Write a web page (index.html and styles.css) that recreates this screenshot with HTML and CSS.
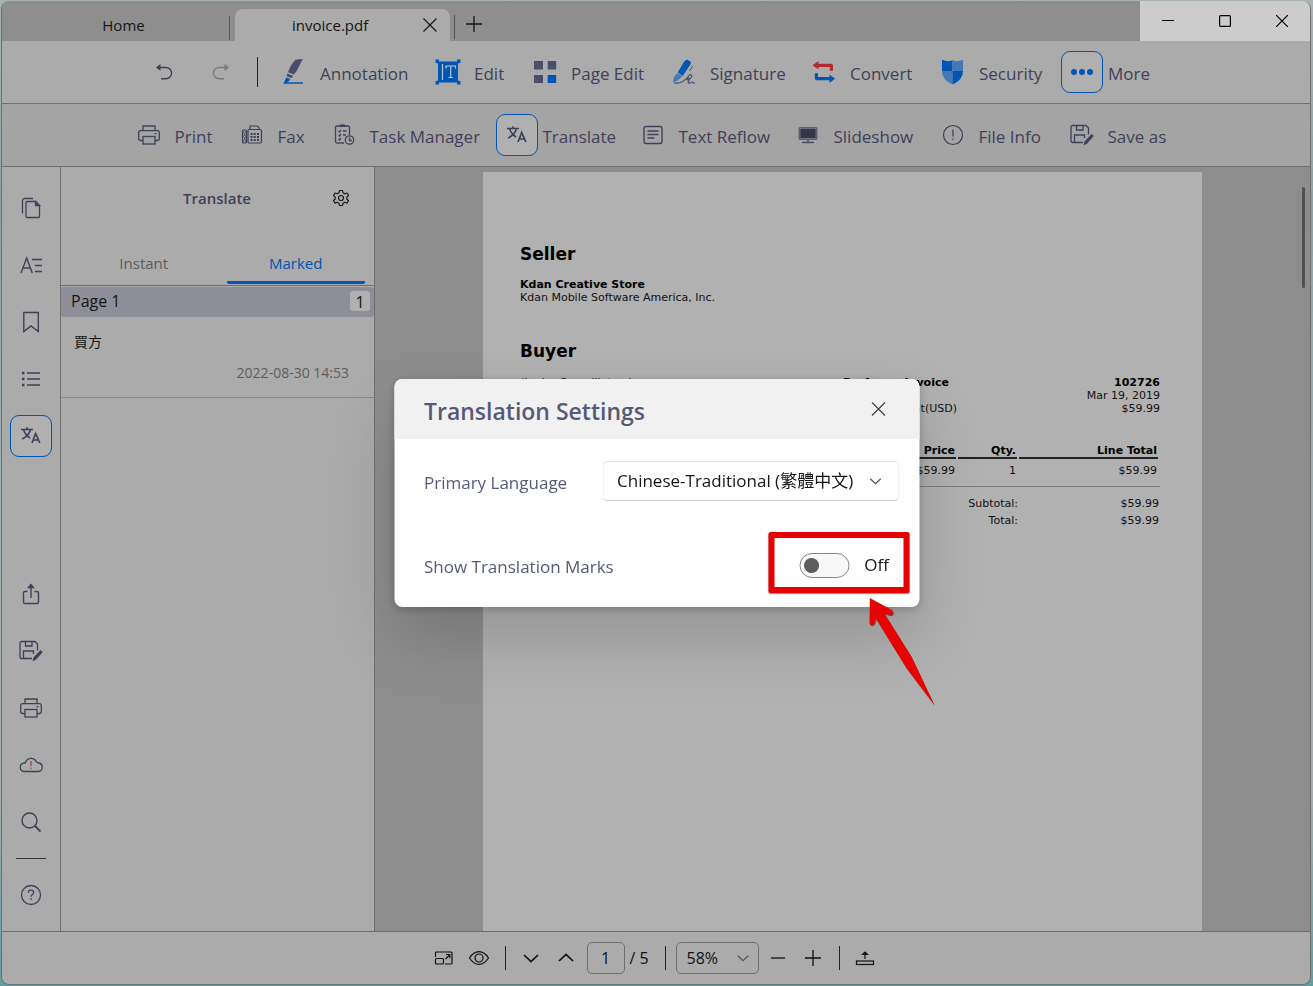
FILE: index.html
```html
<!DOCTYPE html>
<html lang="en">
<head>
<meta charset="utf-8">
<title>invoice.pdf</title>
<link rel="stylesheet" href="styles.css">
</head>
<body>
<svg class="sprite" aria-hidden="true">
  <symbol id="i-translate" viewBox="0 0 24 24"><path d="M2 5.500h12M8 3.200v2.300M11.500 5.500c-1 4-4 7.500-8.500 9.500M4.500 5.500c1 3.500 3.500 6.500 6.500 8.500" fill="none" stroke="currentColor" stroke-width="1.600"/><path d="M13 19l3.700-9.500L20.800 19M14.500 16h5" fill="none" stroke="currentColor" stroke-width="1.700"/></symbol>
  <symbol id="i-print" viewBox="0 0 24 24"><g fill="none" stroke="currentColor" stroke-width="1.300"><path d="M6 7.500V3h12v4.500M6 17.500H3.500a1.800 1.800 0 0 1-1.800-1.800V9.500c0-1.100.8-1.900 1.800-1.900h17c1 0 1.800.8 1.800 1.900v6.200c0 1-.8 1.800-1.800 1.800H18"/><rect x="6" y="13.500" width="12" height="7.500"/><path d="M17.500 10.700h1.800"/></g></symbol>
  <symbol id="i-save" viewBox="0 0 24 24"><g fill="none" stroke="currentColor" stroke-width="1.300"><path d="M13 19.500H2.500a1.500 1.500 0 0 1-1.500-1.500V4a1.500 1.500 0 0 1 1.500-1.500H16L18.500 5v6.500M6.500 2.500V7H13V2.500M4.500 19.500v-7.500h10v3"/></g><path d="M13.500 22.200l1-3.600 7-7.600 2.400 2-7 7.700z" fill="currentColor"/></symbol>
  <symbol id="i-close" viewBox="0 0 16 16"><path d="M1.500 1.500l13 13M14.500 1.500l-13 13" fill="none" stroke="currentColor" stroke-width="1.200"/></symbol>
  <symbol id="i-down" viewBox="0 0 16 16"><path d="M1 5l7 6.500L15 5" fill="none" stroke="currentColor" stroke-width="1.700"/></symbol>
  <symbol id="i-plus" viewBox="0 0 16 16"><path d="M0 8h16M8 0v16" fill="none" stroke="currentColor" stroke-width="1.300"/></symbol>
</svg>

<div class="app">
  <header class="titlebar">
    <nav class="tabs">
      <button class="tab tab-home" type="button">Home</button>
      <div class="tab tab-active"><span class="tab-name">invoice.pdf</span>
        <button class="icon-btn" type="button" aria-label="Close tab"><svg width="16" height="16"><use href="#i-close"/></svg></button></div>
      <button class="tab-add" type="button" aria-label="New tab"><svg width="16" height="16"><use href="#i-plus"/></svg></button>
    </nav>
    <div class="window-controls">
      <button type="button" aria-label="Minimize"><svg width="12" height="12"><path d="M0 5.500h12" stroke="#000"/></svg></button>
      <button type="button" aria-label="Maximize"><svg width="12" height="12"><rect x=".6" y=".6" width="10.800" height="10.800" rx="1" fill="none" stroke="#000" stroke-width="1.200"/></svg></button>
      <button type="button" aria-label="Close"><svg width="12" height="12" viewBox="0 0 16 16"><path d="M0 0l16 16M16 0L0 16" stroke="#000" stroke-width="1.600"/></svg></button>
    </div>
  </header>

  <div class="toolbar toolbar-main">
    <button class="tool" type="button" aria-label="Undo"><span class="cell"><svg width="18" height="18" viewBox="0 0 18 18"><path d="M2 4.500h9a5.300 5.300 0 0 1 0 11.200H6" fill="none" stroke="#3f4158" stroke-width="1.400"/><path d="M1 4.500L5.500 1v7z" fill="#3f4158"/></svg></span></button>
    <button class="tool faded" type="button" aria-label="Redo"><span class="cell"><svg width="18" height="18" viewBox="0 0 18 18"><path d="M16 4.500H7a5.300 5.300 0 0 0 0 11.200h5" fill="none" stroke="#3f4158" stroke-width="1.400"/><path d="M17 4.500L12.500 1v7z" fill="#3f4158"/></svg></span></button>
    <span class="rule"></span>
    <button class="tool" type="button"><span class="cell"><svg width="26" height="26" viewBox="0 0 26 26"><path d="M14.500.8Q17 0 21.700 0l-6 12-2.700 3.400-6-2.200Q10 5 14.500.8z" fill="#4b4e68"/><path d="M6.200 14.600l5.800 2.200-1.500 2.500-4.800-2z" fill="#4b4e68"/><path d="M5.300 18.400l4 1.700-1.500 2L6 23.300h16v1.500H2.300z" fill="#0056b4"/></svg></span>Annotation</button>
    <button class="tool" type="button"><span class="cell"><svg width="26" height="26" viewBox="0 0 26 26"><path d="M2.500 2.500h21v21h-21z" fill="#0056b4"/><path d="M.5.500h3.500V4H.5zM22 .5h3.500V4H22zM.5 22h3.500v3.500H.5zM22 22h3.500v3.500H22z" fill="#0056b4"/><path d="M2.500 5v16M23.500 5v16" stroke="#ababab"/><path d="M7.500 5v16M11 9.500V7h9.500v2.500M15.700 7v11.500M13.500 18.500h4.500" fill="none" stroke="#b8c4d2" stroke-width="1.200"/></svg></span>Edit</button>
    <button class="tool" type="button"><span class="cell"><svg width="24" height="24" viewBox="0 0 24 24"><path d="M1 1h9v8.500H1zM14.700 1h8.500v8.500h-8.500zM1 15h9v8H1z" fill="#4b4e68"/><path d="M14.700 15h8.500v8h-8.500z" fill="#0056b4"/></svg></span>Page Edit</button>
    <button class="tool" type="button"><span class="cell"><svg width="26" height="26" viewBox="0 0 26 26"><path d="M13.500 2L16 .5l4 2.600-.8 2.600-7.500 11.200-5-3.500z" fill="#0056b4"/><path d="M6.300 14l5 3.500-5.500 4.600-3.800 1.400.8-5z" fill="#4378b5"/><path d="M20.500 6.500l1 1-3 4.500" fill="none" stroke="#4b4e68"/><path d="M3 24c7 1 12-3 15.500-8 1.500-1 3 .500 2 2-1.500 2-4 3.500-4.500 2.500s1.500-2 2.500-1c1 .7-2.500 4-1 4.600 1.500.5 3-1.500 4-1 .7.400 0 1.500 2.500.7" fill="none" stroke="#4b4e68" stroke-width="1.200"/></svg></span>Signature</button>
    <button class="tool" type="button"><span class="cell"><svg width="24" height="24" viewBox="0 0 24 24"><path d="M.5 5.300L6.500 1v2.700H19a2 2 0 0 1 2 2v5h-3.200V7H6.500v2.600z" fill="#b32b2d"/><path d="M23 18.700L17.500 23v-2.700H4.800a2 2 0 0 1-2-2v-5H6V17h11.500v-2.500z" fill="#0056b4"/></svg></span>Convert</button>
    <button class="tool" type="button"><span class="cell"><svg width="24" height="26" viewBox="0 0 24 26"><path d="M11.500 1Q9.500 2.500 7 2.300T1 .8V12h10.500z" fill="#0056b4"/><path d="M11.500 1Q13.500 2.500 16 2.300T22 .8V12H11.500zM1 12q0 9 10.500 13.500V12z" fill="#4378b5"/><path d="M22 12q0 9-10.500 13.500V12z" fill="#0056b4"/></svg></span>Security</button>
    <button class="tool" type="button"><span class="cell framed"><svg width="24" height="8" viewBox="0 0 24 8" fill="#0056b4"><circle cx="4" cy="4" r="3"/><circle cx="12" cy="4" r="3"/><circle cx="20" cy="4" r="3"/></svg></span>More</button>
  </div>

  <div class="toolbar toolbar-more">
    <button class="tool" type="button"><span class="cell"><svg width="24" height="24"><use href="#i-print"/></svg></span>Print</button>
    <button class="tool" type="button"><span class="cell"><svg width="22" height="22" viewBox="0 0 22 22"><g fill="none" stroke="currentColor" stroke-width="1.200"><rect x="1.500" y="6" width="4" height="13" rx="1"/><path d="M2 7l2.500 5.500L2 18M5 7l-2.500 5.500L5 18" stroke-width=".7"/><path d="M9 5.500V2h7l2 1.500v2"/><rect x="7" y="5.500" width="13.500" height="13.500" rx="1.200"/></g><path d="M10.500 9v8M13.700 9v8M17 9v8" stroke="currentColor" stroke-width="2" stroke-dasharray="2 1"/></svg></span>Fax</button>
    <button class="tool" type="button"><span class="cell"><svg width="24" height="24" viewBox="0 0 24 24"><g fill="none" stroke="currentColor" stroke-width="1.300"><path d="M12 20H5a1.500 1.500 0 0 1-1.500-1.500v-14A1.500 1.500 0 0 1 5 3h11a1.500 1.500 0 0 1 1.500 1.500V12M6.500 8l1 1 1.500-2M11 8h3.500M6.500 12l1 1 1.500-2M11 12h3M6.500 16l1 1 1.500-2"/><circle cx="17.500" cy="17" r="4.200"/><path d="M17.500 14.500v3h2.500"/></g><path d="M7.500 1.800h2l1-1.100 1 1.100h2V4h-6z" fill="currentColor"/></svg></span>Task Manager</button>
    <button class="tool" type="button"><span class="cell framed"><svg width="24" height="24"><use href="#i-translate"/></svg></span>Translate</button>
    <button class="tool" type="button"><span class="cell"><svg width="20" height="20" viewBox="0 0 20 20" fill="none" stroke="currentColor" stroke-width="1.400"><rect x="1" y="1.500" width="18" height="17" rx="2"/><path d="M4.500 6h11M4.500 9.500h11M4.500 13h7"/></svg></span>Text Reflow</button>
    <button class="tool" type="button"><span class="cell"><svg width="20" height="18" viewBox="0 0 20 18"><rect x="1" y="1.500" width="18" height="12" rx="1" fill="#34374c" stroke="#5a5d72"/><rect x="2" y="2.500" width="16" height="10" fill="none" stroke="#8f909c" stroke-width=".7"/><path d="M10 14v2.500M4 16.500h12" stroke="#4b4e68" stroke-width="1.500"/></svg></span>Slideshow</button>
    <button class="tool" type="button"><span class="cell"><svg width="22" height="22" viewBox="0 0 22 22"><circle cx="11" cy="11" r="9.500" fill="none" stroke="currentColor" stroke-width="1.200"/><path d="M11 5.500v7M11 14.500V16" stroke="currentColor" stroke-width="1.300"/></svg></span>File Info</button>
    <button class="tool" type="button"><span class="cell"><svg width="24" height="24"><use href="#i-save"/></svg></span>Save as</button>
  </div>

  <main class="main">
    <nav class="rail">
      <button class="cell" type="button" aria-label="Pages"><svg width="22" height="22" viewBox="0 0 22 22" fill="none" stroke="currentColor" stroke-width="1.300"><path d="M2.500 16.500V3.500a2 2 0 0 1 2-2H13"/><path d="M6 5.500a1 1 0 0 1 1-1h8.500L19.500 8.500v11a1 1 0 0 1-1 1H7a1 1 0 0 1-1-1z"/><path d="M15.500 4.500l4 4h-4z" fill="currentColor"/></svg></button>
      <button class="cell" type="button" aria-label="Text"><svg width="24" height="20" viewBox="0 0 24 20" fill="none" stroke="currentColor" stroke-width="1.400"><path d="M2 18L7.700 3l5.600 15M4 13h7.500M13 4.500h10M16 10.500h7M16 16.500h7"/></svg></button>
      <button class="cell" type="button" aria-label="Bookmarks"><svg width="20" height="22" viewBox="0 0 20 22" fill="none" stroke="currentColor" stroke-width="1.400"><path d="M2.800 1.500h14.500v19L10 15l-7.200 5.500z"/></svg></button>
      <button class="cell" type="button" aria-label="Outline"><svg width="20" height="16" viewBox="0 0 20 16" fill="none" stroke="currentColor" stroke-width="1.400"><path d="M6 2h13M6 8h13M6 14h13"/><path d="M1 2h2.500M1 8h2.500M1 14h2.500" stroke-width="2.300"/></svg></button>
      <button class="cell framed" type="button" aria-label="Translate"><svg width="24" height="24"><use href="#i-translate"/></svg></button>
      <span class="rail-space"></span>
      <button class="cell" type="button" aria-label="Share"><svg width="20" height="22" viewBox="0 0 20 22" fill="none" stroke="currentColor" stroke-width="1.400"><path d="M6.500 8.500H4a1.500 1.500 0 0 0-1.500 1.500v9a1.500 1.500 0 0 0 1.500 1.500h12a1.500 1.500 0 0 0 1.500-1.500v-9A1.500 1.500 0 0 0 16 8.500h-2.500M10 15V3"/><path d="M7.500 4.500L10 1.500l2.500 3z" fill="currentColor"/></svg></button>
      <button class="cell" type="button" aria-label="Save as"><svg width="24" height="24"><use href="#i-save"/></svg></button>
      <button class="cell" type="button" aria-label="Print"><svg width="24" height="24"><use href="#i-print"/></svg></button>
      <button class="cell" type="button" aria-label="Cloud"><svg width="26" height="18" viewBox="0 0 26 18"><path d="M6 15.500a4.200 4.200 0 0 1-.3-8.300q1.300 0 1.800-.7a5.800 5.800 0 0 1 10.800-.8q.8 1.100 2.500 1.300a4.300 4.300 0 0 1-.5 8.500z" fill="none" stroke="currentColor" stroke-width="1.300"/><path d="M13 5v5M13 11.500V13" stroke="#a8423f" stroke-width="1.300"/></svg></button>
      <button class="cell" type="button" aria-label="Search"><svg width="22" height="22" viewBox="0 0 22 22" fill="none" stroke="currentColor" stroke-width="1.400"><circle cx="9.500" cy="9.500" r="7.500"/><path d="M15 15l5.500 5.500" stroke-width="1.800"/></svg></button>
      <span class="rail-line"></span>
      <button class="cell" type="button" aria-label="Help"><svg width="22" height="22" viewBox="0 0 22 22" fill="none" stroke="currentColor" stroke-width="1.300"><circle cx="11" cy="11" r="9.500"/><path d="M8.300 8.700c0-3.600 5.400-3.400 5.400-.2 0 2-2.700 2-2.700 4.300M11 14.300v1.700"/></svg></button>
    </nav>

    <aside class="panel">
      <div class="panel-head">
        <h2>Translate</h2>
        <button class="icon-btn gear" type="button" aria-label="Settings"><svg width="18" height="18" viewBox="0 0 18 18" fill="none" stroke="#1c1c1c" stroke-width="1.200"><path d="M7.500 1.500h3l.5 2.300 1.700 1 2.300-.8 1.500 2.600L14.800 8v2l1.700 1.500-1.500 2.600-2.300-.8-1.700 1-.5 2.200h-3L7 14.300l-1.700-1-2.300.8-1.500-2.600L3.200 10V8L1.500 6.600 3 4l2.300.8 1.700-1z" stroke-linejoin="round"/><circle cx="9" cy="9" r="2.500"/></svg></button>
      </div>
      <div class="panel-tabs">
        <button type="button">Instant</button>
        <button class="on" type="button">Marked</button>
      </div>
      <div class="group"><span>Page 1</span><span class="count">1</span></div>
      <article class="mark"><p>買方</p><time>2022-08-30 14:53</time></article>
    </aside>

    <section class="viewer">
      <div class="page">
        <h3>Seller</h3>
        <p><b>Kdan Creative Store</b></p>
        <p>Kdan Mobile Software America, Inc.</p>
        <h3 class="buyer">Buyer</h3>
        <div class="parties">
          <p>(Junior Compiliators)</p>
          <dl>
            <dt><b>Proforma Invoice</b></dt><dd><b>102726</b></dd>
            <dt></dt><dd>Mar 19, 2019</dd>
            <dt class="due">Amount(USD)</dt><dd>$59.99</dd>
          </dl>
        </div>
        <table>
          <colgroup><col><col class="c-price"><col class="c-qty"><col class="c-total"></colgroup>
          <thead><tr><th></th><th>Price</th><th>Qty.</th><th>Line Total</th></tr></thead>
          <tbody><tr><td></td><td>$59.99</td><td>1</td><td>$59.99</td></tr></tbody>
        </table>
        <dl class="sums"><dt>Subtotal:</dt><dd>$59.99</dd><dt>Total:</dt><dd>$59.99</dd></dl>
      </div>
      <span class="thumb"></span>
    </section>
  </main>

  <footer class="status">
    <button type="button" aria-label="Fit"><svg width="20" height="16" viewBox="0 0 20 16" fill="none" stroke="currentColor" stroke-width="1.200"><path d="M1.500 7V3a1 1 0 0 1 1-1H17a1 1 0 0 1 1 1v10a1 1 0 0 1-1 1h-6"/><rect x="1.500" y="8.500" width="8" height="5.500" rx="1"/><path d="M11.500 9L15.500 5M12 4.500h3.800v3.800"/></svg></button>
    <button type="button" aria-label="View"><svg width="22" height="16" viewBox="0 0 22 16" fill="none" stroke="currentColor" stroke-width="1.200"><path d="M1.500 8Q5.500 1.700 11 1.700T20.500 8Q16.500 14.300 11 14.300T1.500 8z"/><circle cx="11" cy="8" r="4"/></svg></button>
    <span class="rule"></span>
    <button type="button" aria-label="Next page"><svg width="16" height="16"><use href="#i-down"/></svg></button>
    <button type="button" aria-label="Previous page"><svg class="flip" width="16" height="16"><use href="#i-down"/></svg></button>
    <input class="page-no" type="text" value="1" aria-label="Page number">
    <span class="pages">/ 5</span>
    <span class="rule"></span>
    <span class="pick zoom"><select aria-label="Zoom"><option>58%</option></select><svg width="12" height="12"><use href="#i-down"/></svg></span>
    <button type="button" aria-label="Zoom out"><svg width="16" height="16"><path d="M1 8h14" stroke="currentColor" stroke-width="1.300"/></svg></button>
    <button type="button" aria-label="Zoom in"><svg width="16" height="16"><use href="#i-plus"/></svg></button>
    <span class="rule"></span>
    <button type="button" aria-label="Upload"><svg width="20" height="16" viewBox="0 0 20 16" fill="none" stroke="currentColor" stroke-width="1.200"><rect x="1.500" y="11" width="17" height="3.500"/><path d="M10 9V3"/><path d="M7.500 4.500L10 2l2.500 2.500z" fill="currentColor"/></svg></button>
  </footer>
</div>

<div class="dialog" role="dialog" aria-labelledby="dlg-title">
  <div class="dialog-head">
    <h1 id="dlg-title">Translation Settings</h1>
    <button class="icon-btn" type="button" aria-label="Close"><svg width="16" height="16"><use href="#i-close"/></svg></button>
  </div>
  <div class="dialog-body">
    <div class="field">
      <label for="lang">Primary Language</label>
      <span class="pick lang"><select id="lang"><option>Chinese-Traditional (繁體中文)</option></select><svg width="12" height="12"><use href="#i-down"/></svg></span>
    </div>
    <div class="field">
      <label for="marks">Show Translation Marks</label>
      <span class="switch"><input id="marks" type="checkbox" role="switch">Off</span>
    </div>
  </div>
  <span class="highlight"></span>
  <svg class="arrow" width="70" height="112" viewBox="0 0 70 112"><path id="shaft" d="M1.300 1L23.500 13q3 3.500-1 5l-6.500-1.500 27 43L66 108 38 71 7.500 21.500l-1.500 5q-3 3-5 0z" transform="translate(.5 1.300)" fill="#300" opacity=".5"/><path d="M1.300 1L23.500 13q3 3.500-1 5l-6.500-1.500 27 43L66 108 38 71 7.500 21.500l-1.500 5q-3 3-5 0z" fill="#e80303"/></svg>
</div>
</body>
</html>
```
FILE: styles.css
```css
* { box-sizing: border-box; margin: 0; padding: 0; }

:root {
  --ink: #3f4158;
  --line: #6f6f6f;
  --base: #ababab;
  --blue: #0056b4;
}

body {
  height: 100vh;
  padding: 1px 2px 1px 1px;
  overflow: hidden;
  font: 17px/24px "Open Sans", "Noto Sans CJK TC", sans-serif;
  color: var(--ink);
  background: linear-gradient(#a9b4b6, #88a4a6 20%, #9fb0b5 50%, #a5aeb0 80%, #5f9ea0);
}

button, input, select { font: inherit; color: inherit; background: none; border: 0; }
svg { display: block; flex: none; }
.sprite { position: absolute; width: 0; height: 0; }

.app {
  display: flex;
  flex-direction: column;
  height: 100%;
  border-right: 1px solid var(--line);
  border-bottom: 1px solid var(--line);
  border-left: 1px solid var(--line);
  border-radius: 8px;
  overflow: hidden;
  background: var(--base);
}

/* Title bar */
.titlebar { display: flex; justify-content: space-between; height: 40px; background: #8e8e8e; }
.tabs { display: flex; align-items: flex-end; font-size: 15px; color: #151515; }
.tab { height: 32px; display: flex; align-items: center; justify-content: center; }
.tab-home { width: 228px; height: 24px; border-right: 1px solid #555; padding: 0 0 6px 16px; align-self: center; margin-top: 14px; }
.tab-active { width: 215px; margin-left: 5px; padding: 0 12px 0 57px; justify-content: space-between; border-radius: 8px 8px 0 0; background: var(--base); }
.tab-add { height: 24px; margin: 0 0 2px 4px; padding: 0 12px 6px 11px; border-left: 1px solid #555; }
.icon-btn { display: flex; }
.window-controls { display: flex; background: #ccc; }
.window-controls button { width: 57px; display: flex; align-items: center; justify-content: center; }
.window-controls button:first-child { width: 56px; }

/* Toolbars */
.toolbar { display: grid; align-items: center; justify-content: center; height: 63px; padding-right: 20px; border-bottom: 1px solid var(--line); }
.toolbar-main { grid-template-columns: 57px 57px 16px 154px 97px 139px 140px 129px 129px 88px; }
.toolbar-more { grid-template-columns: 103px 92px 173px 136px 155px 145px 129px 104px; background: #a4a4a4; }
.tool { display: flex; align-items: flex-end; gap: 5px; line-height: 39px; white-space: nowrap; }
.faded { opacity: .45; }
.cell { width: 42px; height: 42px; flex: none; display: flex; align-items: center; justify-content: center; }
.framed { border: 1px solid var(--blue); border-radius: 9px; background: #b0b0b0; }
.rule { width: 1px; height: 24px; background: #222; }
.toolbar .rule { height: 30px; }

/* Body */
.main { flex: 1; min-height: 0; display: flex; border-bottom: 1px solid var(--line); }
.rail { width: 59px; padding: 20px 8px 15px; display: flex; flex-direction: column; align-items: center; gap: 15px; border-right: 1px solid var(--line); }
.rail-space { flex: 1; margin-top: -15px; }
.rail-line { width: 30px; height: 1px; background: #333; }

.panel { width: 314px; border-right: 1px solid var(--line); font-size: 15px; }
.panel-head { display: flex; align-items: center; justify-content: flex-end; height: 62px; padding-right: 24px; }
.panel-head h2 { flex: 1; padding-left: 41px; text-align: center; font-size: 15px; font-weight: 600; }
.panel-tabs { display: grid; grid-template-columns: 1fr 1fr; height: 57px; padding: 12px 9px 1px; border-bottom: 1px solid var(--line); }
.panel-tabs button { padding-top: 4px; border-bottom: 3px solid transparent; color: #5d5d5d; }
.panel-tabs .on { margin-left: 9px; border-color: var(--blue); border-radius: 2px; color: var(--blue); }
.group { display: flex; align-items: center; justify-content: space-between; height: 30px; margin-top: 1px; padding: 0 4px 2px 10px; border-radius: 3px; background: #8e8e98; color: #151515; font-size: 16px; }
.count { width: 20px; height: 20px; border-radius: 3px; background: #b0b0b0; text-align: center; line-height: 22px; }
.mark { height: 81px; padding: 13px 25px 0 13px; border-bottom: 1px solid #8a8a8a; font-size: 14px; }
.mark p { color: #151515; }
.mark time { display: block; margin-top: 7px; text-align: right; color: #5d5d5d; }

/* Document */
.viewer { position: relative; flex: 1; display: flex; justify-content: center; padding-top: 5px; background: #8d8d8d; overflow: hidden; }
.page { width: 719px; height: 1017px; flex: none; padding: 71px 42px 0 37px; background: #b1b1b1; color: #111; font: 11px/13px "DejaVu Sans", sans-serif; }
.page h3 { margin-bottom: 13px; font-size: 17px; line-height: 22px; color: #000; }
.page h3.buyer { margin-top: 36px; }
.page b { color: #000; }
.parties { display: grid; grid-template-columns: 323px 1fr; margin-top: 14px; }
.parties dl { display: grid; grid-template-columns: 114px 1fr; }
.parties .due { text-align: right; }
dd { text-align: right; }
table { width: 100%; margin-top: 26px; table-layout: fixed; border-spacing: 2px 0; border-bottom: 1px solid #7d7d7d; }
.c-price { width: 100px; }
.c-qty { width: 59px; }
.c-total { width: 139px; }
th { padding: 3px 1px 0; border-bottom: 2px solid #222; text-align: right; color: #000; }
td { height: 27px; padding: 0 1px 4px; text-align: right; }
.sums { display: grid; grid-template-columns: 498px 1fr; row-gap: 4px; margin-top: 10px; padding-right: 1px; }
.sums dt { text-align: right; }
.thumb { position: absolute; top: 20px; right: 5px; width: 3px; height: 101px; border-radius: 2px; background: #505050; }

/* Status bar */
.status { display: flex; align-items: center; justify-content: center; height: 52px; padding-right: 3px; color: #111; font-size: 16px; }
.status button { width: 35px; height: 32px; display: flex; align-items: center; justify-content: center; }
.status .rule { margin: 0 8px; }
.flip { transform: scaleY(-1); }
.page-no { width: 38px; height: 32px; margin: 0 5px 0 3px; border: 1px solid var(--line); border-radius: 5px; text-align: center; }
.pages { width: 27px; }
.pick { position: relative; display: block; }
.pick select { width: 100%; height: 100%; appearance: none; border-radius: 5px; }
.pick svg { position: absolute; top: 50%; margin-top: -6px; pointer-events: none; }
.zoom { width: 83px; height: 32px; margin: 0 2px; }
.zoom select { padding-left: 10px; border: 1px solid var(--line); }
.zoom svg { right: 10px; color: #555; }

/* Dialog */
.dialog {
  position: fixed;
  top: 50%;
  left: 50%;
  width: 525px;
  transform: translate(-50%, -50%);
  border-radius: 8px;
  background: #fff;
  color: #565a78;
  box-shadow: 0 2px 10px rgba(0, 0, 0, .2), 0 32px 64px rgba(0, 0, 0, .16);
}
.dialog-head { display: flex; align-items: center; justify-content: space-between; height: 60px; padding: 4px 33px 0 30px; border-radius: 8px 8px 0 0; background: #f1f1f1; }
.dialog-head h1 { font-size: 23px; font-weight: 600; line-height: 32px; }
.dialog-head .icon-btn { margin-bottom: 4px; color: #444; }
.dialog-body { padding: 22px 20px 22px 30px; }
.field { display: flex; align-items: center; justify-content: space-between; height: 40px; }
.field + .field { margin-top: 44px; }
.field label { padding-top: 3px; }
.lang { width: 297px; height: 40px; color: #151515; }
.lang select { padding-left: 14px; border: 1px solid #e6e6e6; border-bottom-color: #ccc; }
.lang svg { right: 18px; color: #555; }
.switch { display: flex; align-items: center; gap: 15px; padding-right: 10px; color: #151515; }
.switch input { appearance: none; width: 50px; height: 25px; border: 1px solid #858585; border-radius: 13px; background: radial-gradient(circle at 11px 50%, #5d5d5d 7px, #f8f8f8 8px); }
.highlight { position: absolute; top: 153px; right: 10px; width: 141px; height: 61px; border: 6px solid #e60000; border-radius: 2px; box-shadow: 0 1px 1px rgba(0, 0, 0, .45); }
.arrow { position: absolute; top: 218px; left: 474px; }
```
